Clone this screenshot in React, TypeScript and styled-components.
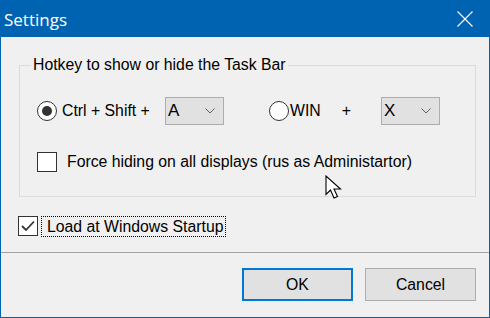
import styled, { createGlobalStyle } from 'styled-components';

const GlobalStyle = createGlobalStyle`
  html, body {
    margin: 0;
    padding: 0;
    background: #f0f0f0;
  }
  body {
    font-family: "Liberation Sans", Arial, sans-serif;
  }
`;

const Window = styled.div`
  position: relative;
  width: 490px;
  height: 318px;
  box-sizing: border-box;
  border: 1px solid #0063b1;
  background: #f0f0f0;
  display: flex;
  flex-direction: column;
  overflow: hidden;
`;

const TitleBar = styled.div`
  flex: none;
  height: 36px;
  background: #0063b1;
  color: #fff;
  display: flex;
  align-items: center;
  justify-content: space-between;
  padding: 0 16px 0 3px;
  font-family: "Open Sans", "Noto Sans", sans-serif;
  font-size: 17px;
`;

const Body = styled.div`
  padding: 19px 13px 15px 16px;
  font-size: 15.8px;
  color: #000;
`;

const GroupBox = styled.fieldset`
  margin: 0 0 0 2px;
  padding: 23px 0 24px 17px;
  border: 1px solid #dcdcdc;
  min-inline-size: 0;
`;

const GroupLegend = styled.legend`
  margin-left: -6px;
  padding: 0 2px;
  line-height: 18px;
`;

const HotkeyRow = styled.div`
  display: flex;
  align-items: center;
  height: 28px;
`;

const Option = styled.div<{ $width: number; $gap: number; $offset?: number }>`
  display: flex;
  align-items: center;
  gap: ${p => p.$gap}px;
  width: ${p => p.$width}px;
  margin-left: ${p => p.$offset ?? 0}px;
  flex: none;
`;

const Radio = styled.span<{ $checked?: boolean }>`
  flex: none;
  width: 20px;
  height: 20px;
  box-sizing: border-box;
  border-radius: 50%;
  border: 1.5px solid #333;
  background: #fff;
  display: flex;
  align-items: center;
  justify-content: center;

  &::after {
    content: '';
    width: 10px;
    height: 10px;
    border-radius: 50%;
    background: #333;
    display: ${p => (p.$checked ? 'block' : 'none')};
  }
`;

const Plus = styled.span`
  margin-left: 20px;
`;

const Combo = styled.div`
  flex: none;
  width: 59px;
  height: 28px;
  box-sizing: border-box;
  border: 1px solid #adadad;
  background: #e1e1e1;
  display: flex;
  align-items: center;
  justify-content: space-between;
  padding: 0 8px 0 2px;
  font-size: 17px;
`;

const CheckRow = styled.div`
  display: flex;
  align-items: center;
  gap: 10px;
  margin-top: 27px;
  height: 20px;
`;

const CheckBox = styled.span`
  flex: none;
  width: 20px;
  height: 20px;
  box-sizing: border-box;
  border: 1px solid #333;
  background: #fff;
  display: flex;
  align-items: center;
  justify-content: center;
`;

const StartupRow = styled.div`
  display: flex;
  align-items: flex-start;
  margin-top: 19px;
  margin-left: 1px;
`;

const FocusLabel = styled.span`
  margin-left: 3px;
  border: 1px dotted #000;
  padding: 0 1px 0 5px;
  line-height: 19px;
`;

const Separator = styled.div`
  height: 1px;
  background: #a0a0a0;
`;

const Footer = styled.div`
  display: flex;
  justify-content: flex-end;
  gap: 12px;
  padding: 15px 13px 16px;
`;

const Button = styled.button<{ $default?: boolean }>`
  width: 111px;
  height: 33px;
  box-sizing: border-box;
  margin: 0;
  padding: 0;
  border: ${p => (p.$default ? '2px solid #0078d7' : '1px solid #adadad')};
  background: #e1e1e1;
  font-family: "Liberation Sans", Arial, sans-serif;
  font-size: 15.8px;
  color: #000;
`;

const Cursor = styled.svg`
  position: absolute;
  left: 324px;
  top: 174px;
`;

const Chevron = () => (
  <svg width="10" height="6" viewBox="0 0 10 6">
    <polyline points="0.5,0.5 5,5 9.5,0.5" fill="none" stroke="#606060" strokeWidth="1" />
  </svg>
);

const App = () => {
  return (
    <>
      <GlobalStyle />
      <Window>
        <TitleBar>
          <span>Settings</span>
          <svg width="16" height="16" viewBox="0 0 16 16">
            <path d="M0.5 0.5 L15.5 15.5 M15.5 0.5 L0.5 15.5" stroke="#fff" strokeWidth="1.1" />
          </svg>
        </TitleBar>

        <Body>
          <GroupBox>
            <GroupLegend>Hotkey to show or hide the Task Bar</GroupLegend>
            <HotkeyRow>
              <Option $width={128} $gap={5}>
                <Radio $checked />
                <span>Ctrl + Shift +</span>
              </Option>
              <Combo>
                <span>A</span>
                <Chevron />
              </Combo>
              <Option $width={112} $gap={1} $offset={45}>
                <Radio />
                <span>WIN</span>
                <Plus>+</Plus>
              </Option>
              <Combo>
                <span>X</span>
                <Chevron />
              </Combo>
            </HotkeyRow>
            <CheckRow>
              <CheckBox />
              <span>Force hiding on all displays (rus as Administartor)</span>
            </CheckRow>
          </GroupBox>

          <StartupRow>
            <CheckBox>
              <svg width="16" height="16" viewBox="0 0 16 16">
                <polyline points="2,8 6,12 14,3.5" fill="none" stroke="#333" strokeWidth="1.8" />
              </svg>
            </CheckBox>
            <FocusLabel>Load at Windows Startup</FocusLabel>
          </StartupRow>
        </Body>

        <Separator />

        <Footer>
          <Button $default>OK</Button>
          <Button>Cancel</Button>
        </Footer>

        <Cursor width="19" height="25" viewBox="0 0 19 25">
          <path
            d="M1 1 V19.5 L5.5 15 L9 23 L12.5 21.5 L9 14 H15.5 Z"
            fill="#fff"
            stroke="#000"
            strokeWidth="1.1"
            strokeLinejoin="miter"
          />
        </Cursor>
      </Window>
    </>
  );
};

export default App;
